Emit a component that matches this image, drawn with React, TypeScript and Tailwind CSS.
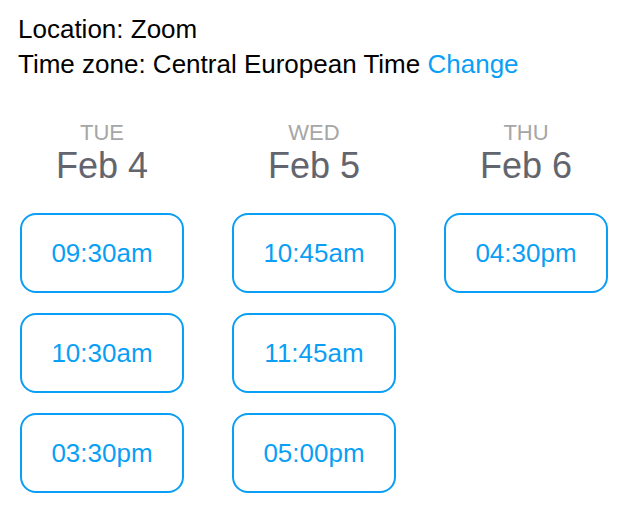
import React from "react";

const days = [
  { dow: "TUE", date: "Feb 4", times: ["09:30am", "10:30am", "03:30pm"] },
  { dow: "WED", date: "Feb 5", times: ["10:45am", "11:45am", "05:00pm"] },
  { dow: "THU", date: "Feb 6", times: ["04:30pm"] },
];

export default function App() {
  return (
    <div
      className="w-[644px] h-[524px] bg-white overflow-hidden"
      style={{ fontFamily: '"Liberation Sans", Arial, sans-serif' }}
    >
      <div className="pt-3 pl-[18px] text-[26px] leading-[35px] text-black">
        <div>Location: Zoom</div>
        <div>
          Time zone: Central European Time{" "}
          <span className="text-[#0a9ff5] cursor-pointer">Change</span>
        </div>
      </div>
      <div className="mt-[38px] pl-5 flex gap-12">
        {days.map((d) => (
          <div key={d.dow} className="w-[164px] flex flex-col">
            <div className="text-center text-[22px] leading-[26px] text-[#a6a6a6]">
              {d.dow}
            </div>
            <div className="text-center text-[36px] leading-[40px] text-[#63656e]">
              {d.date}
            </div>
            <div className="mt-[27px] flex flex-col gap-5">
              {d.times.map((t) => (
                <button
                  key={t}
                  className="h-[80px] w-[164px] rounded-[16px] border-2 border-[#0a9ff5] bg-white text-[#0a9ff5] text-[26px] flex items-center justify-center"
                >
                  {t}
                </button>
              ))}
            </div>
          </div>
        ))}
      </div>
    </div>
  );
}
